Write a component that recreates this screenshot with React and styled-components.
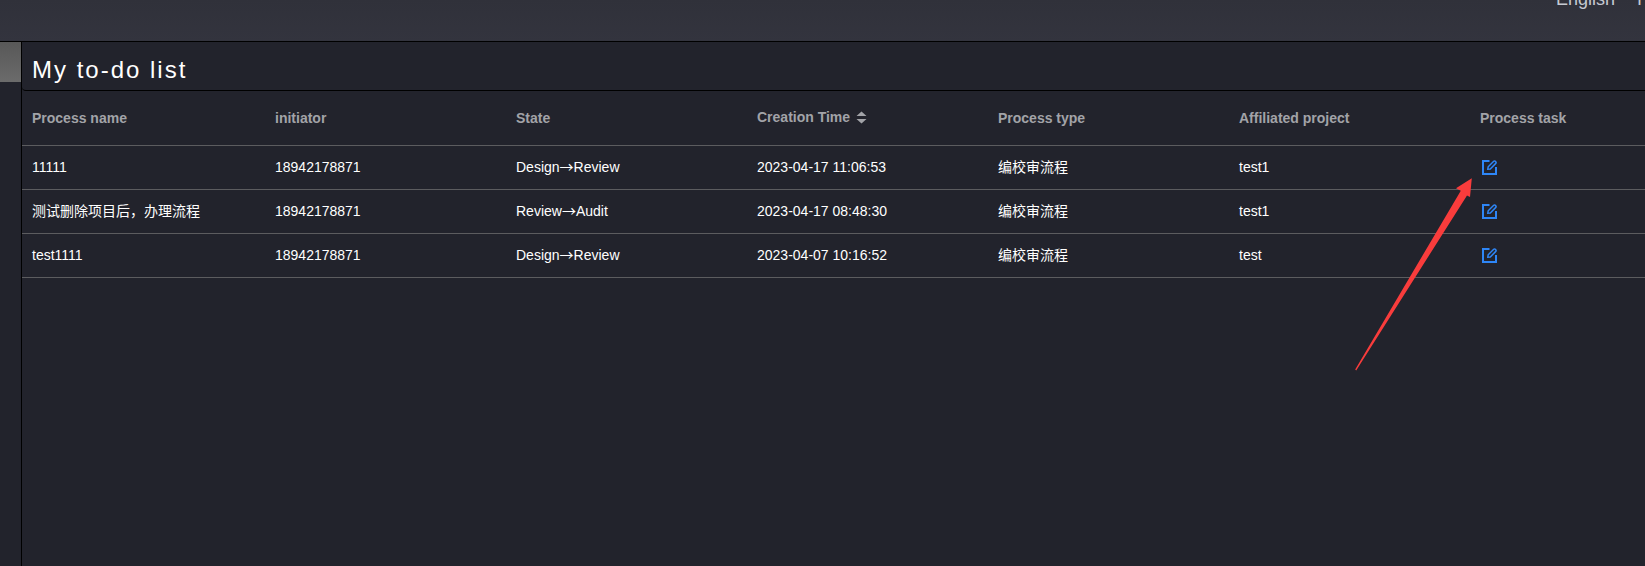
import styled, { createGlobalStyle } from "styled-components";

const GlobalStyle = createGlobalStyle`
  html, body {
    margin: 0;
    padding: 0;
    height: 100%;
    background: #22232c;
    overflow: hidden;
  }
  #root {
    height: 100%;
  }
`;

const Page = styled.div`
  position: relative;
  display: flex;
  flex-direction: column;
  width: 1645px;
  height: 566px;
  overflow: hidden;
  font-family: "Liberation Sans", "Noto Sans CJK SC", sans-serif;
  color: #fff;
`;

const TopBar = styled.div`
  flex: 0 0 41px;
  display: flex;
  justify-content: flex-end;
  gap: 19px;
  overflow: hidden;
  background: linear-gradient(#30313a, #33343e);
  border-bottom: 1px solid #000;
`;

const TopItem = styled.span`
  margin-top: -10px;
  font-size: 18px;
  line-height: 18px;
  color: #c6cad2;
  white-space: nowrap;
`;

const Body = styled.div`
  flex: 1;
  display: flex;
  min-height: 0;
`;

const Sidebar = styled.div`
  flex: 0 0 21px;
  background: #22232c;
  border-right: 1px solid #000;
`;

const SidebarThumb = styled.div`
  height: 40px;
  background: linear-gradient(#585858, #6b6b6b);
`;

const Main = styled.div`
  flex: 1;
  min-width: 0;
`;

const Title = styled.div`
  height: 49px;
  padding: 8px 0 0 10px;
  display: flex;
  align-items: center;
  box-sizing: border-box;
  border-radius: 4px 0 0 4px;
  background: #22232c;
  border-bottom: 1px solid #000;
  font-size: 24px;
  letter-spacing: 2px;
  color: #fff;
`;

const Row = styled.div`
  display: grid;
  grid-template-columns: 243px repeat(5, 241px) 1fr;
  align-items: center;
  height: ${(props) => (props.$head ? "55px" : "44px")};
  box-sizing: border-box;
  border-bottom: 1px solid #5c5c5f;
`;

const HeadCell = styled.div`
  padding-left: 10px;
  display: flex;
  align-items: center;
  gap: 6px;
  font-size: 14px;
  line-height: 16px;
  font-weight: bold;
  color: #a2a3a8;
  white-space: nowrap;
  margin-top: ${(props) => (props.$sortable ? "-2px" : "0")};
`;

const Cell = styled.div`
  padding: 0 0 2px 10px;
  font-size: 14px;
  line-height: 16px;
  color: #fff;
  white-space: nowrap;
`;

const StateArrow = styled.span`
  font-family: "Noto Sans CJK SC", sans-serif;
`;

const EditButton = styled.button`
  display: block;
  padding: 0;
  margin: 4px 0 0 1px;
  border: 0;
  background: none;
  color: #2e86f7;
  cursor: pointer;
`;

const Annotation = styled.svg`
  position: absolute;
  left: 0;
  top: 0;
  pointer-events: none;
`;

const columns = [
  "Process name",
  "initiator",
  "State",
  "Creation Time",
  "Process type",
  "Affiliated project",
  "Process task",
];

const tasks = [
  {
    id: 1,
    name: "11111",
    initiator: "18942178871",
    from: "Design",
    to: "Review",
    time: "2023-04-17 11:06:53",
    type: "编校审流程",
    project: "test1",
  },
  {
    id: 2,
    name: "测试删除项目后，办理流程",
    initiator: "18942178871",
    from: "Review",
    to: "Audit",
    time: "2023-04-17 08:48:30",
    type: "编校审流程",
    project: "test1",
  },
  {
    id: 3,
    name: "test1111",
    initiator: "18942178871",
    from: "Design",
    to: "Review",
    time: "2023-04-07 10:16:52",
    type: "编校审流程",
    project: "test",
  },
];

const SortIcon = () => (
  <svg width="11" height="13" viewBox="0 0 11 13">
    <path d="M5.5 0.5 L10.5 5 H0.5 Z M0.5 8 H10.5 L5.5 12.5 Z" fill="#a2a3a8" />
  </svg>
);

const EditIcon = () => (
  <svg width="16" height="15" viewBox="0 0 16 15" fill="none">
    <path
      d="M8.5 1 H2 V14 H15 V7"
      stroke="currentColor"
      strokeWidth="2"
    />
    <path
      d="M6.8 9.2 L7.2 6.8 L12.7 1.2 Q13.4 .6 14.2 1.2 L14.9 1.9 Q15.4 2.7 14.8 3.4 L9.3 9 Z"
      stroke="currentColor"
      strokeWidth="1.5"
    />
  </svg>
);

const App = () => {
  return (
    <Page>
      <GlobalStyle />
      <TopBar>
        <TopItem>English</TopItem>
        <TopItem>T</TopItem>
      </TopBar>
      <Body>
        <Sidebar>
          <SidebarThumb />
        </Sidebar>
        <Main>
          <Title>My to-do list</Title>
          <Row $head>
            {columns.map((col) => (
              <HeadCell key={col} $sortable={col === "Creation Time"}>
                {col}
                {col === "Creation Time" && <SortIcon />}
              </HeadCell>
            ))}
          </Row>
          {tasks.map((task) => (
            <Row key={task.id}>
              <Cell>{task.name}</Cell>
              <Cell>{task.initiator}</Cell>
              <Cell>
                {task.from}
                <StateArrow>→</StateArrow>
                {task.to}
              </Cell>
              <Cell>{task.time}</Cell>
              <Cell>{task.type}</Cell>
              <Cell>{task.project}</Cell>
              <Cell>
                <EditButton>
                  <EditIcon />
                </EditButton>
              </Cell>
            </Row>
          ))}
        </Main>
      </Body>
      <Annotation width="1645" height="566">
        <path
          d="M1471.8 178.3 L1456 188.3 L1460.8 190.7 L1355.2 369.6 L1356.2 370.4 L1467 195.5 L1470 197 Z"
          fill="#f93c3c"
        />
      </Annotation>
    </Page>
  );
};

export default App;
